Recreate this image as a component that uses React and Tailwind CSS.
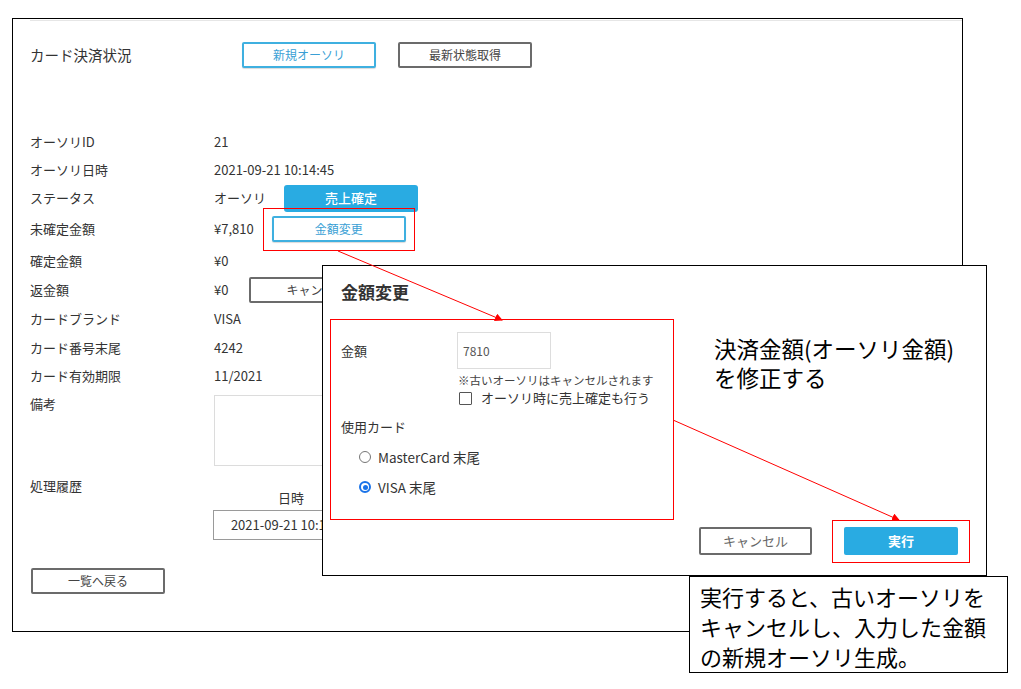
import React from "react";

function Row({ label, h, children }) {
  return (
    <div className="flex items-center" style={{ height: h }}>
      <div className="w-[184px] shrink-0">{label}</div>
      <div className="flex items-center">{children}</div>
    </div>
  );
}

const outlineBlue =
  "w-[134px] h-[26px] border-2 border-[#3fb0e0] rounded-[2px] text-[12px] text-[#3a9fd5] flex items-center justify-center bg-white shadow-[0_1px_1px_rgba(0,0,0,0.15)]";
const outlineGray =
  "w-[134px] h-[26px] border-2 border-[#6b6b6b] rounded-[2px] text-[12px] text-[#444] flex items-center justify-center bg-white";

export default function App() {
  return (
    <div className="relative w-[1021px] h-[689px] bg-white overflow-hidden font-['Noto_Sans_CJK_JP',sans-serif] text-[#333]">
      {/* main frame */}
      <div className="ml-[12px] mt-[18px] w-[951px] h-[614px] border border-black flex flex-col">
        <div className="mt-px ml-[17px] border-t border-[#e6e6e6]" />
        <div className="mt-[21px] h-[26px] pl-[17px] flex items-center">
          <div className="w-[212px] text-[14.5px] text-[#333]">カード決済状況</div>
          <div className={outlineBlue}>新規オーソリ</div>
          <div className={outlineGray + " ml-[22px]"}>最新状態取得</div>
        </div>

        <div className="mt-[60px] pl-[17px] text-[13px] flex flex-col">
          <Row label="オーソリID" h={28}>21</Row>
          <Row label="オーソリ日時" h={28}>2021-09-21 10:14:45</Row>
          <Row label="ステータス" h={28}>
            <span>オーソリ</span>
            <div className="ml-[18px] w-[134px] h-[27px] rounded-[3px] bg-[#29abe2] text-white text-[13px] font-medium flex items-center justify-center">
              売上確定
            </div>
          </Row>
          <Row label="未確定金額" h={34}>
            <span>¥7,810</span>
            <div className={outlineBlue + " ml-[18px]"}>金額変更</div>
          </Row>
          <Row label="確定金額" h={30}>¥0</Row>
          <Row label="返金額" h={28}>
            <span>¥0</span>
            <div className={outlineGray + " ml-[21px]"}>キャンセル</div>
          </Row>
          <Row label="カードブランド" h={30}>VISA</Row>
          <Row label="カード番号末尾" h={28}>4242</Row>
          <Row label="カード有効期限" h={28}>11/2021</Row>
          <div className="flex items-start">
            <div className="w-[184px] leading-[28px]">備考</div>
            <div className="mt-[5px] w-[300px] h-[71px] border border-[#dcdcdc]" />
          </div>
          <div className="mt-[6px] flex items-start">
            <div className="w-[184px] leading-[28px]">処理履歴</div>
            <div className="mt-[16px] flex flex-col w-[156px] -ml-px">
              <div className="h-[20px] leading-[20px] text-center">日時</div>
              <div className="mt-[2px] h-[30px] border border-[#9a9a9a] flex items-center justify-center whitespace-nowrap">
                2021-09-21 10:14:45
              </div>
            </div>
          </div>
          <div className={outlineGray + " mt-[28px] ml-px"}>一覧へ戻る</div>
        </div>
      </div>

      {/* red highlight around 金額変更 */}
      <div className="absolute left-[263px] top-[208px] w-[152px] h-[43px] border border-[#ff0000]" />

      {/* modal */}
      <div className="absolute left-[322px] top-[265px] w-[665px] h-[311px] border border-black bg-white flex flex-col">
        <div className="pl-[18px] pt-[14px] text-[17px] leading-[24px] font-bold text-[#333]">金額変更</div>
        <div className="pl-[18px] text-[13px] text-[#333]">
          <div className="mt-[28px] flex items-center">
            <div className="w-[116px]">金額</div>
            <div className="w-[94px] h-[37px] border border-[#dddddd] flex items-center pl-[5px] text-[12px] text-[#555]">
              7810
            </div>
          </div>
          <div className="ml-[117px] mt-[3px] text-[11.5px] leading-[16px] text-[#444] whitespace-nowrap">
            ※古いオーソリはキャンセルされます
          </div>
          <div className="ml-[118px] mt-px h-[18px] flex items-center">
            <div className="w-[13px] h-[13px] border border-[#555] rounded-[1px]" />
            <span className="ml-[9px] text-[13px] whitespace-nowrap">オーソリ時に売上確定も行う</span>
          </div>
          <div className="mt-[10px] leading-[20px]">使用カード</div>
          <div className="mt-[5px] ml-[18px] h-[30px] flex items-center">
            <div className="w-[12px] h-[12px] rounded-full border border-[#767676]" />
            <span className="ml-[7px] text-[13.5px]">MasterCard 末尾</span>
          </div>
          <div className="ml-[18px] h-[30px] flex items-center">
            <div className="w-[12px] h-[12px] rounded-full border-2 border-[#1a73e8] flex items-center justify-center">
              <div className="w-[5px] h-[5px] rounded-full bg-[#1a73e8]" />
            </div>
            <span className="ml-[7px] text-[13.5px]">VISA 末尾</span>
          </div>
        </div>
        <div className="mt-auto mb-[20px] mr-[28px] flex justify-end gap-[32px]">
          <div className="w-[113px] h-[28px] border-2 border-[#6b6b6b] rounded-[2px] text-[13px] text-[#666] flex items-center justify-center">
            キャンセル
          </div>
          <div className="w-[114px] h-[28px] rounded-[2px] bg-[#29abe2] text-white text-[13px] font-bold flex items-center justify-center">
            実行
          </div>
        </div>
        <div className="absolute left-[391px] top-[68px] text-[22.5px] leading-[29px] text-black whitespace-nowrap">
          決済金額(オーソリ金額)
          <br />
          を修正する
        </div>
      </div>

      {/* red highlights in modal */}
      <div className="absolute left-[330px] top-[319px] w-[344px] h-[201px] border border-[#ff0000]" />
      <div className="absolute left-[832px] top-[520px] w-[138px] h-[43px] border border-[#ff0000]" />

      {/* annotation box */}
      <div className="absolute left-[689px] top-[576px] w-[319px] h-[97px] border border-black bg-white pl-[10px] pt-[4px] text-[22px] leading-[30px] text-black whitespace-nowrap">
        実行すると、古いオーソリを
        <br />
        キャンセルし、入力した金額
        <br />
        の新規オーソリ生成。
      </div>

      {/* arrows */}
      <svg className="absolute inset-0 pointer-events-none" width="1021" height="689">
        <defs>
          <marker id="ah" markerWidth="8" markerHeight="8" refX="7" refY="4" orient="auto" markerUnits="userSpaceOnUse">
            <path d="M0,0 L8,4 L0,8 Z" fill="#ff0000" />
          </marker>
        </defs>
        <line x1="338" y1="251" x2="502" y2="320" stroke="#ff0000" strokeWidth="1" markerEnd="url(#ah)" />
        <line x1="673" y1="420" x2="899" y2="520" stroke="#ff0000" strokeWidth="1" markerEnd="url(#ah)" />
      </svg>
    </div>
  );
}
